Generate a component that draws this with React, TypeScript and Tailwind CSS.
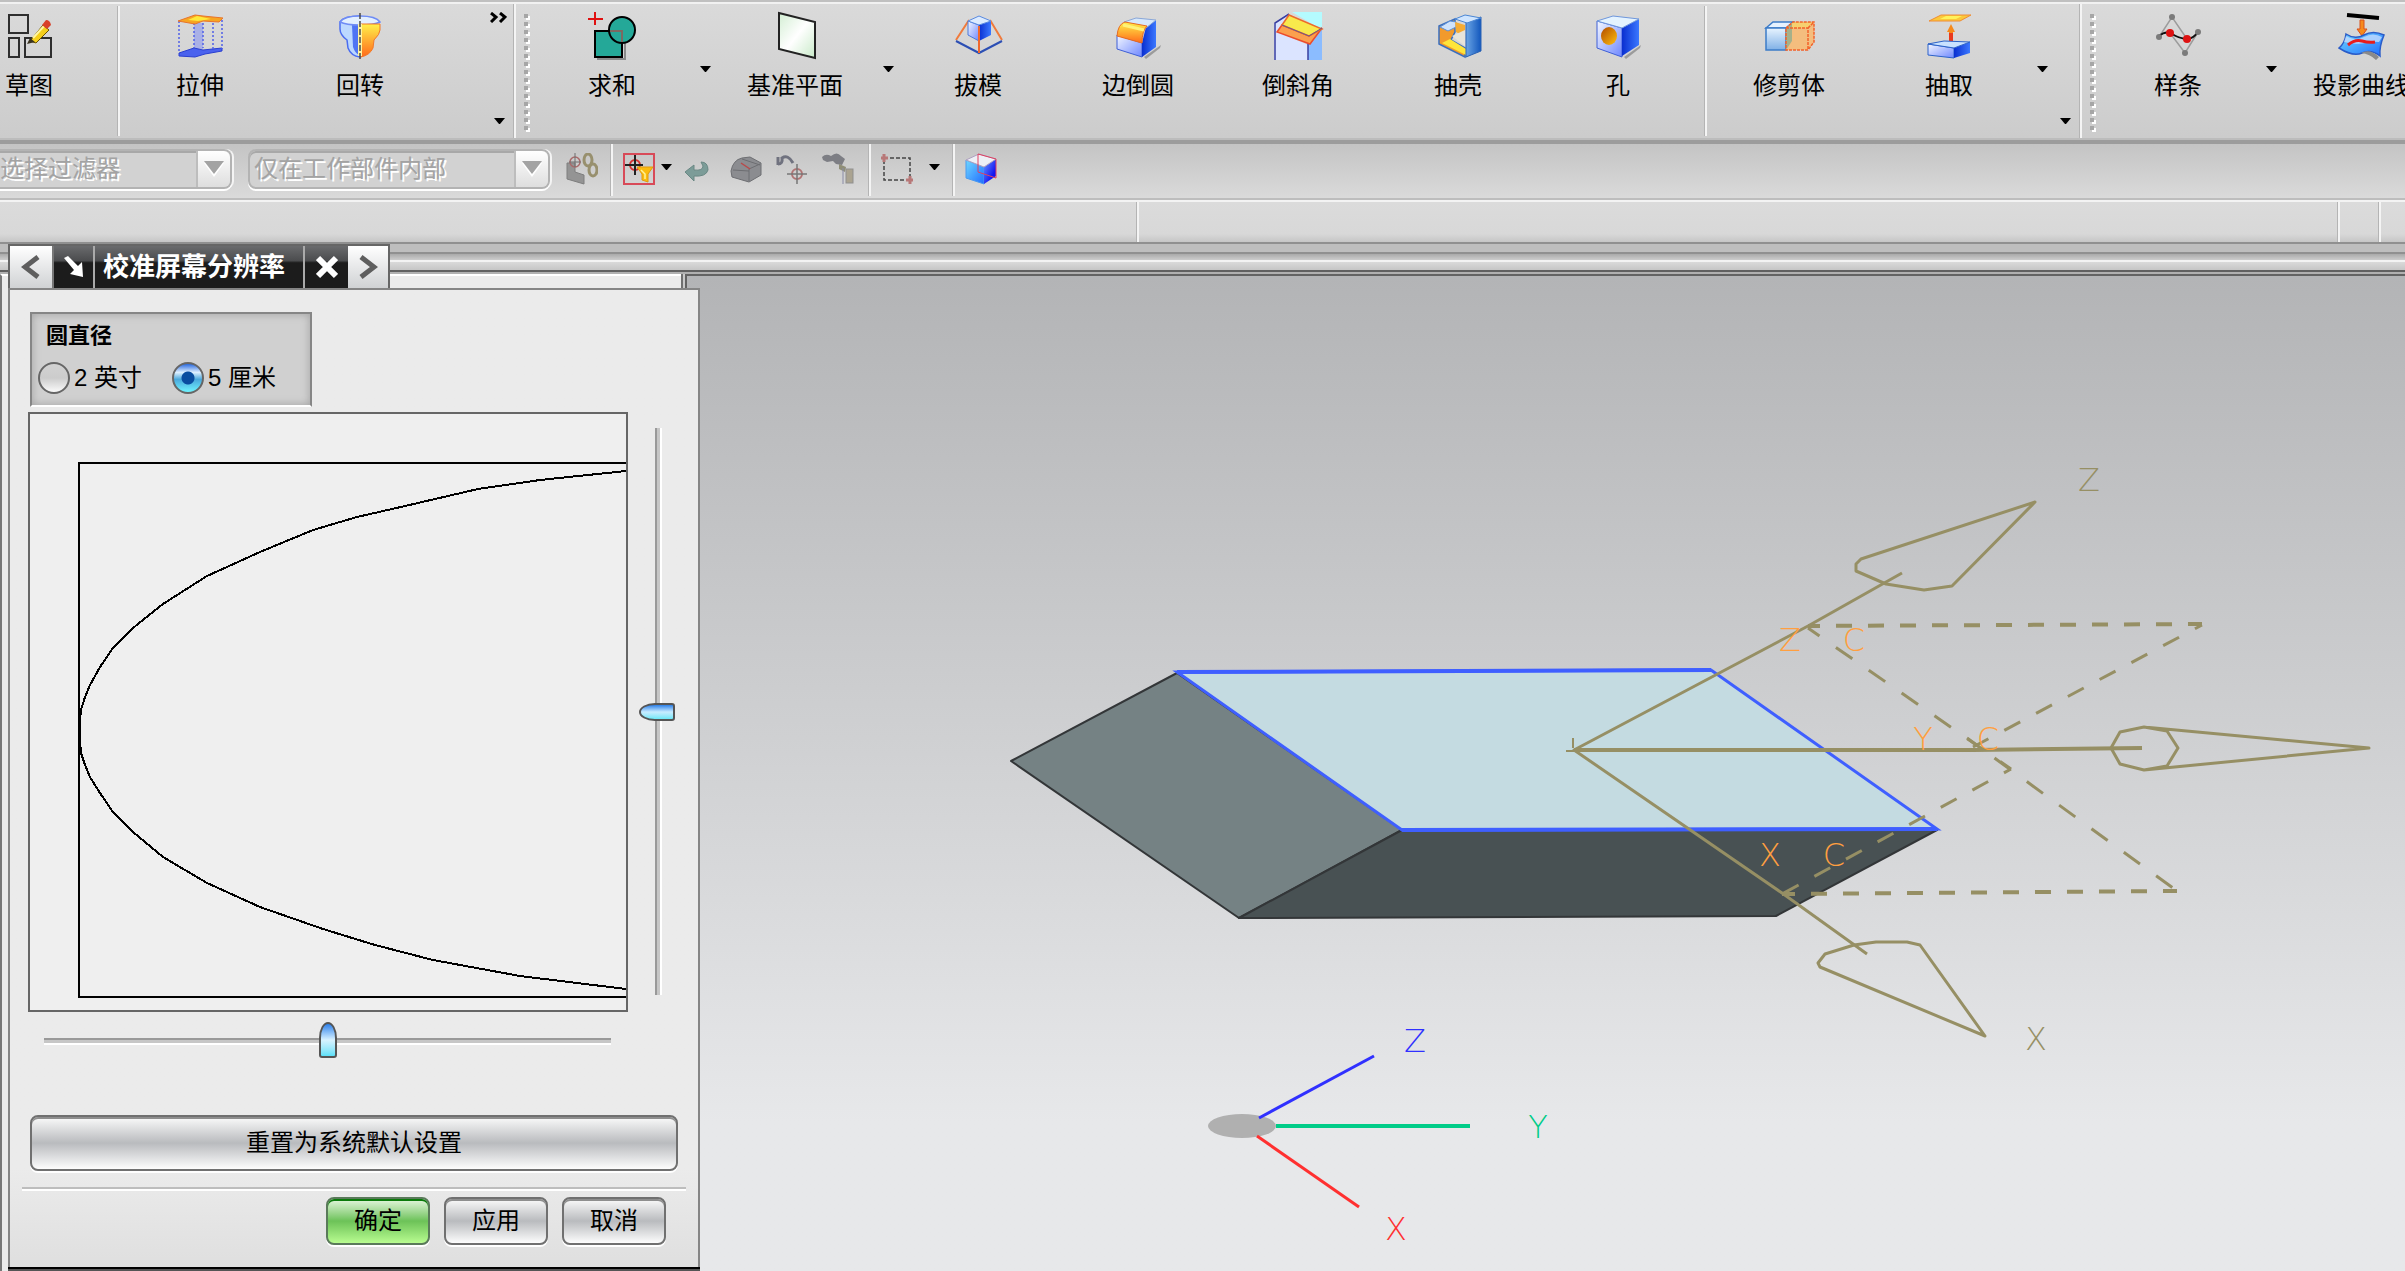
import { useState } from 'react'
import type { ReactNode } from 'react'
import clsx from 'clsx'

/* ---------- shared gradients ---------- */

function Gradients() {
  return (
    <svg className="h-0 w-0" aria-hidden="true">
      <defs>
        <linearGradient id="front" x1="0" y1="0" x2="1" y2="1">
          <stop offset="0" stopColor="#f4f8ff" />
          <stop offset="1" stopColor="#6d86ff" />
        </linearGradient>
        <linearGradient id="side" x1="0" y1="0" x2="1" y2="0">
          <stop offset="0" stopColor="#0a2fd0" />
          <stop offset="1" stopColor="#3b78ff" />
        </linearGradient>
        <linearGradient id="sky" x1="0" y1="0" x2="1" y2="0">
          <stop offset="0" stopColor="#6aa4e4" />
          <stop offset="1" stopColor="#1257bd" />
        </linearGradient>
        <linearGradient id="amber" x1="0" y1="0" x2="0" y2="1">
          <stop offset="0" stopColor="#fff04a" />
          <stop offset="1" stopColor="#ff6a1a" />
        </linearGradient>
        <linearGradient id="hole" x1="0" y1="0" x2="1" y2="1">
          <stop offset="0" stopColor="#b04a00" />
          <stop offset="1" stopColor="#ffc010" />
        </linearGradient>
        <linearGradient id="mint" x1="0" y1="0" x2="1" y2="1">
          <stop offset="0" stopColor="#d3eed3" />
          <stop offset="0.5" stopColor="#ffffff" />
          <stop offset="1" stopColor="#c8eac8" />
        </linearGradient>
        <linearGradient id="pale" x1="0" y1="0" x2="0" y2="1">
          <stop offset="0" stopColor="#e8f4ff" />
          <stop offset="1" stopColor="#7fb0e6" />
        </linearGradient>
        <linearGradient id="cyan" x1="0" y1="0" x2="1" y2="1">
          <stop offset="0" stopColor="#6fd8ff" />
          <stop offset="1" stopColor="#1f6cff" />
        </linearGradient>
        <linearGradient id="deep" x1="0" y1="0" x2="1" y2="1">
          <stop offset="0" stopColor="#6a9cff" />
          <stop offset="0.7" stopColor="#1414f0" />
        </linearGradient>
      </defs>
    </svg>
  )
}

/* ---------- toolbar icons, 48 x 48 ---------- */

function Icon({ children }: { children: ReactNode }) {
  return (
    <svg width="48" height="48" viewBox="0 0 48 48" fill="none" className="shrink-0 overflow-visible" aria-hidden="true">
      {children}
    </svg>
  )
}

const sketchIcon = (
  <Icon>
    <g stroke="#2e2e2e" strokeWidth="2">
      <rect x="4" y="3" width="19" height="18" />
      <rect x="4" y="26" width="10" height="19" />
      <rect x="20" y="26" width="26" height="19" />
    </g>
    <path d="M25 29l13-16 6 5-13 13z" fill="#f5cf1c" stroke="#6b5200" />
    <path d="M28 26l12-13" stroke="#fff6a0" strokeWidth="2" />
    <path d="M37 13l4-5q4 0 5 5l-4 4z" fill="#d8402a" />
    <path d="M22 32l3-6 5 4z" fill="#3a3320" />
  </Icon>
)

const extrudeIcon = (
  <Icon>
    <path d="M18 11h9v26h-9z" fill="#a9b0e6" />
    <path d="M3 41l15-5 9 2 19-2v3l-17 3-10 3-16-1z" fill="#4a62ee" stroke="#2a3fd0" />
    <path d="M3 9v31M46 8v29M37 11v26M18 11v25M27 11v25" stroke="#5060e8" strokeWidth="1.5" strokeDasharray="2 2" />
    <path d="M2 9l17-6 8 1 20 2-4 4-16-1-8 3z" fill="#f7a522" stroke="#e8742a" />
    <path d="M12 8l9-4 14 3-13 2z" fill="#ffe93a" />
  </Icon>
)

const revolveIcon = (
  <Icon>
    <path d="M4 10q4-6 20-6v41q-9-1-12-9l-1-8q-7-5-7-11z" fill="#bcd8ff" stroke="#4b6df0" strokeWidth="1.5" />
    <path d="M16 13h7v30q-4-2-6-8z" fill="#4f74f4" />
    <path d="M4 10q4-6 20-6t20 6q-6 3-20 3T4 10z" fill="#e2efff" stroke="#6f8cf5" strokeWidth="1.5" />
    <path d="M25 12h19v6q0 4-6 10l-1 8q-3 7-12 9z" fill="url(#amber)" stroke="#f2792a" />
    <path d="M22 12h4v32h-4z" fill="#fff3a0" />
    <path d="M24 1v46" stroke="#4a4a4a" strokeWidth="1.5" strokeDasharray="6 2" />
  </Icon>
)

const uniteIcon = (
  <Icon>
    <path d="M9 47h28V20" stroke="#8b8b8b" strokeWidth="2" />
    <rect x="7" y="19" width="27" height="26" fill="#24a898" stroke="#000" strokeWidth="2" />
    <circle cx="34" cy="18" r="13" fill="#24a898" stroke="#000" strokeWidth="2" />
    <path d="M22 19h12v11" stroke="#7c6a62" strokeWidth="2" />
    <path d="M7 0v13M0 7h15" stroke="#e01010" strokeWidth="2" />
  </Icon>
)

const planeIcon = (
  <Icon>
    <path d="M8 1l36 9v36L8 37z" fill="url(#mint)" stroke="#222" strokeWidth="2" />
  </Icon>
)

const draftIcon = (
  <Icon>
    <path d="M15 8L2 28M36 8l12 20" stroke="#f07a3c" strokeWidth="2" />
    <path d="M2 29l23 12 23-12" stroke="#2c4fb4" strokeWidth="2" />
    <path d="M14 9l11 4v16l-11-6z" fill="url(#front)" stroke="#4b78d8" />
    <path d="M25 13l12-4v14l-12 6z" fill="url(#side)" />
    <path d="M14 9l11-5 12 5-12 4z" fill="#dcebff" stroke="#5a8ae0" />
    <path d="M25 14v27" stroke="#f0672c" strokeWidth="2" />
  </Icon>
)

const blendIcon = (
  <Icon>
    <path d="M30 45l17-12-1 3-14 11z" fill="#9b9b9b" />
    <path d="M3 23l25 8v14L3 37z" fill="url(#front)" stroke="#3e5fd6" />
    <path d="M28 45V31l4-16 10-7v27z" fill="url(#side)" />
    <path d="M10 10l12-4 20 2-10 8z" fill="#d7e8fb" stroke="#8aa7d8" />
    <path d="M3 24q1-12 8-14l22 4q-5 5-5 17z" fill="url(#amber)" stroke="#e86a20" />
    <path d="M9 13l21 5" stroke="#fff27a" strokeWidth="3" />
  </Icon>
)

const chamferIcon = (
  <Icon>
    <path d="M18 0h30v18z" fill="#b4fbff" />
    <path d="M0 12L12 2l3 1L4 20l30 13v15H0z" fill="#dbe4ff" />
    <path d="M34 30l14-13v31H34z" fill="#8bbcff" />
    <path d="M1 48V11L15 2M34 48V30" stroke="#3a3fa0" strokeWidth="1.5" />
    <path d="M8 13l27 11 13-8-12 16L3 20z" fill="#fba04e" stroke="#ec4b2c" strokeWidth="1.5" />
    <path d="M15 3l33 14-13 7L8 13z" fill="#f8e94c" stroke="#ec6a2c" strokeWidth="1.5" />
    <path d="M8 13l27 11 13-8" stroke="#6a5a8c" />
  </Icon>
)

const shellIcon = (
  <Icon>
    <path d="M5 14l16-7v13l-4 8 14 8v9L5 32z" fill="#f29a2c" stroke="#3a6fc0" strokeWidth="1.5" />
    <path d="M6 15l8 4 8-4v-5l-6-1z" fill="#cfe2fb" stroke="#5a8fd8" />
    <path d="M21 10l10 3v12l-9-5z" fill="#f6ac34" />
    <path d="M18 24l13-6v16z" fill="#e8e4da" />
    <path d="M8 31l8-4 16 10v6z" fill="#ffe53a" />
    <path d="M32 10l15-5v34l-15 6z" fill="url(#sky)" stroke="#2a62b4" />
    <path d="M21 7l10-4 16 3-14 5z" fill="#cfe5ff" stroke="#4a86d4" />
  </Icon>
)

const holeIcon = (
  <Icon>
    <path d="M30 45l17-12-1 3-14 11z" fill="#9b9b9b" />
    <path d="M3 9l25 7v29L3 36z" fill="url(#front)" stroke="#3e5fd6" />
    <path d="M28 16l17-9v26L28 44z" fill="url(#side)" />
    <path d="M3 9l16-5 26 3-17 9z" fill="#e4f3ff" stroke="#6f97dc" />
    <ellipse cx="15" cy="24" rx="8" ry="9" fill="url(#hole)" />
  </Icon>
)

const trimIcon = (
  <Icon>
    <path d="M1 16l7-6h20l-7 6z" fill="#e6f2ff" stroke="#3d7cc8" strokeWidth="1.5" />
    <path d="M1 16h20v22H1z" fill="url(#pale)" stroke="#3d7cc8" strokeWidth="1.5" />
    <path d="M21 16l7-6h21v20l-6 8H21z" fill="#f4bd7e" />
    <path d="M21 16l7-6h21l-6 6z" fill="#f6d070" />
    <path d="M21 16l6-5v18l-6 9z" fill="#a5b08a" />
    <path d="M21 16h22v22H21zM21 16l7-6h21v20l-6 8M43 16l6-6" stroke="#f2622a" strokeWidth="1.5" strokeDasharray="3 1" />
  </Icon>
)

const extractIcon = (
  <Icon>
    <path d="M4 9l12-6h30l-11 6z" fill="#fbc83a" stroke="#f08c34" />
    <path d="M15 7l6-3h16l-6 3z" fill="#fff25a" />
    <path d="M26 12l4 8h-2v9h-4v-9h-2z" fill="#f58a1c" />
    <path d="M24 21h4v8h-4z" fill="#ea3a1c" />
    <path d="M3 32l26 4v10L3 43z" fill="url(#front)" stroke="#2c62c8" />
    <path d="M29 36l16-6v11l-16 5z" fill="url(#side)" />
    <path d="M3 32l16-3 26 1-16 6z" fill="#c9e2ff" stroke="#2c62c8" />
  </Icon>
)

const splineIcon = (
  <Icon>
    <path d="M5 25L18 5l15 22M16 21l15 20L44 20" stroke="#9c9c9c" strokeWidth="1.5" />
    <path d="M5 24q7-6 13-2t15 5q6 0 11-7" stroke="#111" strokeWidth="2" />
    <g fill="#7b7b7b">
      <circle cx="18" cy="5" r="3" />
      <circle cx="5" cy="25" r="3" />
      <circle cx="44" cy="20" r="3" />
      <circle cx="31" cy="41" r="3" />
    </g>
    <circle cx="16" cy="21" r="4" fill="#dd1212" />
    <circle cx="33" cy="27" r="4" fill="#dd1212" />
  </Icon>
)

const projectIcon = (
  <Icon>
    <path d="M10 3l32 3" stroke="#000" strokeWidth="4" />
    <path d="M23 8h4v9h3l-5 7-5-7h3z" fill="#f58a1c" stroke="#d8501c" />
    <path d="M9 22q9 6 18 1t20 0q-5 12-4 21-9-7-18-3T2 36q6-5 7-14z" fill="url(#cyan)" stroke="#2a5cc8" strokeWidth="1.5" />
    <path d="M9 24q9 6 18 1t18 0l-3 5q-8-1-14 1T7 30z" fill="#c4dcff" opacity="0.8" />
    <path d="M24 41q9-5 18 4l-3 3q-6-6-15-7z" fill="#8a8a8a" />
    <path d="M11 33q7-6 14-4t13 1" stroke="#e81c1c" strokeWidth="3" />
  </Icon>
)

/* ---------- selection bar icons, 32 x 32 ---------- */

function SmallIcon({ children }: { children: ReactNode }) {
  return (
    <svg width="32" height="32" viewBox="0 0 32 32" fill="none" className="shrink-0" aria-hidden="true">
      {children}
    </svg>
  )
}

const linkIcon = (
  <SmallIcon>
    <path d="M1 10h8v9l9 3v9L1 26z" fill="#949494" stroke="#7e7e7e" />
    <circle cx="9" cy="9" r="5" stroke="#a86a6a" strokeWidth="1.5" />
    <path d="M9 0v14M3 9h12" stroke="#6e6e6e" />
    <ellipse cx="22" cy="7" rx="4" ry="6" stroke="#98906e" strokeWidth="3" />
    <ellipse cx="27" cy="17" rx="4" ry="6" stroke="#98906e" strokeWidth="3" />
  </SmallIcon>
)

const filterIcon = (
  <SmallIcon>
    <rect x="1" y="1" width="30" height="30" stroke="#d84a58" strokeWidth="2" />
    <circle cx="12" cy="12" r="5" stroke="#d83030" strokeWidth="2" />
    <path d="M12 2v20M2 12h18" stroke="#222" strokeWidth="2" />
    <path d="M14 14h16l-5 7v8l-6-2v-6z" fill="#fbbc10" stroke="#e09a10" />
    <path d="M18 17l4 4v5" stroke="#fff29a" strokeWidth="1.5" />
  </SmallIcon>
)

const backIcon = (
  <SmallIcon>
    <path d="M3 19l9-7v5q9 1 9-4l-2-4q7 0 7 8-2 7-14 6v5z" fill="#7c9c98" stroke="#6a8884" />
  </SmallIcon>
)

const faceIcon = (
  <SmallIcon>
    <path d="M1 18q2-11 11-13l8-1 11 6v12l-12 7L2 24z" fill="#8b8c90" stroke="#6d6e72" />
    <path d="M12 6l18 6M19 28V16l11-5M3 17l16 1" stroke="#6d6e72" />
    <path d="M11 10l9 6" stroke="#b84a4a" strokeWidth="1.5" />
  </SmallIcon>
)

const snapArcIcon = (
  <SmallIcon>
    <path d="M2 12V4M2 11q5 0 4-6 6-4 11 5" stroke="#70727f" strokeWidth="3" />
    <circle cx="21" cy="21" r="5" stroke="#b07474" strokeWidth="2" />
    <path d="M21 11v20M11 21h20" stroke="#777" strokeWidth="1.5" />
  </SmallIcon>
)

const boltIcon = (
  <SmallIcon>
    <path d="M0 4q4-4 9-1 6-5 10 0l4 3-3 6-6-1-3-3-6 1-4-2z" fill="#7d7e84" />
    <path d="M17 11l7 3-1 5-6-3z" fill="#8f8e78" />
    <path d="M21 15v16" stroke="#8a8ca6" />
    <rect x="24" y="16" width="7" height="14" fill="#aaa390" stroke="#8f8f8f" />
  </SmallIcon>
)

const marqueeIcon = (
  <SmallIcon>
    <path d="M3 5h26v22H3z" stroke="#444" strokeWidth="1.5" strokeDasharray="4 2" />
    <path d="M0 5h7M3 1v8M25 27h7M29 23v8" stroke="#b87878" strokeWidth="3" />
  </SmallIcon>
)

const cubeIcon = (
  <SmallIcon>
    <path d="M1 7l18 7v17L1 25z" fill="url(#cyan)" stroke="#4a9af0" />
    <path d="M19 14l12-8v17l-12 8z" fill="url(#deep)" />
    <path d="M1 7l13-6 17 5-12 8z" fill="#eef0f6" stroke="#b0a0c0" />
    <path d="M13 1l18 5v19l-18-6z" stroke="#e04060" />
  </SmallIcon>
)

/* ---------- toolbar parts ---------- */

function Caret() {
  return (
    <svg width="11" height="6" viewBox="0 0 11 6" aria-hidden="true">
      <path d="M0 0h11L6 6H5z" fill="#000" />
    </svg>
  )
}

function ToolButton({ label, icon, narrow }: { label: string; icon: ReactNode; narrow?: boolean }) {
  return (
    <button
      type="button"
      className={clsx('flex shrink-0 flex-col items-center pt-2 text-2xl leading-9', narrow ? 'w-[58px]' : 'w-[160px]')}
    >
      {icon}
      <span className="mt-2 whitespace-nowrap">{label}</span>
    </button>
  )
}

function DropButton({ label }: { label: string }) {
  return (
    <button type="button" aria-label={label} className="flex h-full w-[23px] shrink-0 items-start justify-center pt-[62px] pl-1">
      <Caret />
    </button>
  )
}

function Divider({ className }: { className?: string }) {
  return <div className={clsx('w-[3px] shrink-0 border-r-2 border-l border-r-[#f4f4f4] border-l-[#b4b4b4]', className)} />
}

function Gripper() {
  return (
    <div className="ml-2 flex w-2 shrink-0 flex-col gap-1 pt-[10px]">
      {Array.from({ length: 15 }, (_, i) => (
        <div key={i} className="size-1 bg-[#a6a6a6] shadow-[2px_2px_0_#fff]" />
      ))}
    </div>
  )
}

function MainToolbar() {
  return (
    <div className="flex h-[138px] overflow-hidden border-t-2 border-b-2 border-t-[#f1f1f1] border-b-[#bcbcbc] bg-linear-to-b from-[#dadada] to-[#cccccc]">
      <ToolButton label="草图" icon={sketchIcon} narrow />
      <Divider className="mt-0.5 mb-0.5 ml-[59px]" />
      <ToolButton label="拉伸" icon={extrudeIcon} />
      <ToolButton label="回转" icon={revolveIcon} />
      <div className="flex w-[73px] shrink-0 flex-col items-end justify-between pt-2 pr-1 pb-3.5">
        <button type="button" aria-label="更多命令" className="pr-0.5">
          <svg width="17" height="11" viewBox="0 0 17 11" fill="none" stroke="#000" strokeWidth="3">
            <path d="M1 1l5 4-5 5M10 1l5 4-5 5" />
          </svg>
        </button>
        <button type="button" aria-label="工具条选项" className="pr-1">
          <Caret />
        </button>
      </div>
      <Divider />
      <Gripper />
      <ToolButton label="求和" icon={uniteIcon} />
      <DropButton label="求和选项" />
      <ToolButton label="基准平面" icon={planeIcon} />
      <DropButton label="基准平面选项" />
      <ToolButton label="拔模" icon={draftIcon} />
      <ToolButton label="边倒圆" icon={blendIcon} />
      <ToolButton label="倒斜角" icon={chamferIcon} />
      <ToolButton label="抽壳" icon={shellIcon} />
      <ToolButton label="孔" icon={holeIcon} />
      <Divider className="mt-0.5 mr-0.5 mb-0.5 ml-1.5" />
      <ToolButton label="修剪体" icon={trimIcon} />
      <ToolButton label="抽取" icon={extractIcon} />
      <DropButton label="抽取选项" />
      <button type="button" aria-label="工具条选项" className="flex shrink-0 items-end pb-3.5 pl-2">
        <Caret />
      </button>
      <Divider className="ml-2" />
      <Gripper />
      <ToolButton label="样条" icon={splineIcon} />
      <DropButton label="样条选项" />
      <ToolButton label="投影曲线" icon={projectIcon} />
    </div>
  )
}

function ComboBox({ label, value, className }: { label: string; value: string; className?: string }) {
  return (
    <div
      className={clsx(
        'flex h-10 shrink-0 overflow-hidden rounded-lg border-2 border-[#b3b3b3] bg-[#d2d2d2] shadow-[0_2px_0_#fff,2px_0_0_#f4f4f4,inset_0_2px_0_#a8a8a8]',
        className,
      )}
    >
      <select
        aria-label={label}
        disabled
        className="h-full min-w-0 flex-1 appearance-none bg-transparent text-2xl leading-9 text-[#a3a3a3] opacity-100 [text-shadow:2px_2px_0_#fff]"
      >
        <option>{value}</option>
      </select>
      <div className="flex w-[34px] items-center justify-center border-l-2 border-[#bdbdbd] bg-linear-to-b from-white to-[#dedede]">
        <svg width="20" height="16" viewBox="0 0 20 16" aria-hidden="true">
          <path d="M0 2h20L10 16z" fill="#fff" />
          <path d="M0 0h20L10 13z" fill="#a3a3a3" />
        </svg>
      </div>
    </div>
  )
}

function BarButton({ label, icon, className }: { label: string; icon: ReactNode; className?: string }) {
  return (
    <button type="button" aria-label={label} className={clsx('shrink-0', className)}>
      {icon}
    </button>
  )
}

function SelectionBar() {
  return (
    <div className="flex h-[60px] items-center overflow-hidden border-t-4 border-b-2 border-t-[#9c9c9c] border-b-[#bdbdbd] bg-linear-to-b from-[#c4c4c4] to-[#dadada] pb-1">
      <ComboBox label="选择过滤器" value="选择过滤器" className="w-[232px] rounded-l-none border-l-0" />
      <ComboBox label="选择范围" value="仅在工作部件内部" className="ml-4 w-[302px] pl-1" />
      <BarButton label="关联" icon={linkIcon} className="ml-4" />
      <Divider className="ml-3 h-[54px]" />
      <BarButton label="过滤" icon={filterIcon} className="ml-2.5" />
      <BarButton label="过滤选项" icon={<Caret />} className="ml-1.5 pb-1" />
      <BarButton label="返回" icon={backIcon} className="ml-2.5" />
      <BarButton label="面" icon={faceIcon} className="ml-4" />
      <BarButton label="捕捉" icon={snapArcIcon} className="ml-3.5" />
      <BarButton label="螺栓" icon={boltIcon} className="ml-3.5" />
      <Divider className="ml-3.5 h-[54px]" />
      <BarButton label="矩形选择" icon={marqueeIcon} className="ml-2.5" />
      <BarButton label="矩形选择选项" icon={<Caret />} className="ml-4 pb-1" />
      <Divider className="ml-3 h-[54px]" />
      <BarButton label="着色" icon={cubeIcon} className="ml-2.5" />
    </div>
  )
}

function StatusBar() {
  return (
    <div className="flex h-[44px] border-t-2 border-b-2 border-t-[#f3f3f3] border-b-[#909090] bg-linear-to-b from-[#dbdbdb] via-[#d8d8d8] via-80% to-[#c6c6c6]">
      <div className="w-[1136px] shrink-0" />
      <Divider />
      <div className="flex-1" />
      <Divider />
      <div className="w-[38px]" />
      <Divider />
      <div className="w-6" />
    </div>
  )
}

/* ---------- 3D scene ---------- */

const AXIS = '#968f64'
const CSYS = '#ff9f40'

const LABELS = [
  { text: 'Z', x: 2089, y: 491, fill: AXIS },
  { text: 'X', x: 2036, y: 1050, fill: AXIS },
  { text: 'Z', x: 1790, y: 651, fill: CSYS },
  { text: 'C', x: 1854, y: 651, fill: CSYS },
  { text: 'Y', x: 1923, y: 750, fill: CSYS },
  { text: 'C', x: 1988, y: 750, fill: CSYS },
  { text: 'X', x: 1770, y: 866, fill: CSYS },
  { text: 'C', x: 1834, y: 866, fill: CSYS },
  { text: 'Z', x: 1415, y: 1052, fill: '#3030ff' },
  { text: 'Y', x: 1538, y: 1138, fill: '#00cc88' },
  { text: 'X', x: 1396, y: 1240, fill: '#ff3030' },
]

function Viewport() {
  return (
    <svg
      viewBox="689 276 1716 995"
      preserveAspectRatio="xMinYMin meet"
      fill="none"
      strokeWidth="3"
      className="block w-full"
      role="img"
      aria-label="图形窗口"
    >
      {/* solid body */}
      <g strokeWidth="2" stroke="#333638" strokeLinejoin="round">
        <path d="M1011 761L1177 673L1402 830L1239 918z" fill="#758284" />
        <path d="M1239 918L1402 830H1937L1776 916z" fill="#485153" />
      </g>
      <path d="M1177 672L1711 670L1937 829L1402 830z" fill="#c4dbe1" stroke="#3f5fff" />
      <path d="M1177 672L1711 670M1402 830L1937 829" stroke="#3f5fff" strokeWidth="4" />

      {/* datum planes */}
      <g stroke={AXIS}>
        <path d="M1808 626L2202 624" strokeWidth="4" strokeDasharray="16 16" strokeDashoffset="4" />
        <path d="M1782 894L2177 891" strokeWidth="4" strokeDasharray="16 16" strokeDashoffset="3" />
        <path d="M2202 625L1973 747" strokeDasharray="18 18" strokeDashoffset="10" />
        <path d="M2011 769L1782 894" strokeDasharray="18 18" strokeDashoffset="10" />
        <path d="M1808 628L2011 769" strokeDasharray="20 20" strokeDashoffset="6" />
        <path d="M1967 738L2177 891" strokeDasharray="20 20" strokeDashoffset="6" />
      </g>

      {/* axes */}
      <g stroke={AXIS} strokeLinejoin="round">
        <path d="M1902 573L1808 626L1574 750L1782 893L1867 954" />
        <path d="M1574 750H1973L2142 748" strokeWidth="4" />
        <path d="M1566 751h8M1573 738v10" strokeWidth="2" />
        <path d="M2035 502L1861 559L1856 564V571L1886 584L1924 590L1952 586z" />
        <path d="M1985 1036L1820 967L1818 963L1825 954L1854 945L1876 942H1907L1920 945z" />
        <path d="M2144 727L2167 731L2178 748L2167 766L2144 770L2120 764L2111 748L2120 732zL2369 748L2144 770" />
      </g>

      {/* view triad */}
      <ellipse cx="1242" cy="1126" rx="34" ry="12" fill="#b0b0b0" />
      <path d="M1276 1126H1470" stroke="#00cc88" strokeWidth="4" />
      <path d="M1259 1118L1374 1056" stroke="#3030ff" />
      <path d="M1257 1136L1359 1207" stroke="#ff3030" />

      {LABELS.map(({ text, x, y, fill }) => (
        <text
          key={`${x}-${y}`}
          x={x}
          y={y}
          fill={fill}
          stroke="none"
          textAnchor="middle"
          className="font-['DejaVu_Sans',sans-serif] text-[32px] font-extralight"
        >
          {text}
        </text>
      ))}
    </svg>
  )
}

/* ---------- dialog ---------- */

const BUTTON =
  'rounded-lg border-2 border-[#707070] bg-linear-to-b from-[#fbfbfb] via-[#b9bbbe] to-[#fdfdfd] text-2xl leading-9 shadow-[0_2px_0_#fff,inset_0_2px_0_#8e8e8e]'

function TitleTabs() {
  return (
    <div className="flex h-11 w-[382px] border-2 border-b-0 border-[#666] bg-[#1c1c1c] text-white">
      <button type="button" aria-label="上一个" className="flex w-[42px] items-center justify-center bg-linear-to-b from-white to-[#d0d2d4]">
        <svg width="20" height="24" viewBox="0 0 20 24" fill="none" stroke="#5e5e5e" strokeWidth="5">
          <path d="M17 2L4 12l13 10" />
        </svg>
      </button>
      <div className="flex flex-1 items-stretch border-l-2 border-[#777] bg-linear-to-b from-[#6a6b6d] from-0% via-[#4b4c4e] via-35% to-[#1c1c1c] to-40%">
        <button type="button" aria-label="固定" className="flex w-[39px] items-center justify-center">
          <svg width="22" height="24" viewBox="0 0 22 24" fill="#fff">
            <path d="M1 3l4-2 10 10 4-4 1 15-13-3 4-4z" />
          </svg>
        </button>
        <h1 className="flex-1 border-r-2 border-l-2 border-[#aaa] pl-2 text-[26px] leading-[42px] font-bold whitespace-nowrap">校准屏幕分辨率</h1>
        <button type="button" aria-label="关闭" className="flex w-[43px] items-center justify-center">
          <svg width="22" height="24" viewBox="0 0 22 24" stroke="#fff" strokeWidth="6">
            <path d="M2 3l18 18M20 3L2 21" />
          </svg>
        </button>
      </div>
      <button type="button" aria-label="下一个" className="flex w-10 items-center justify-center bg-linear-to-b from-white to-[#d0d2d4]">
        <svg width="20" height="24" viewBox="0 0 20 24" fill="none" stroke="#5e5e5e" strokeWidth="5">
          <path d="M3 2l13 10L3 22" />
        </svg>
      </button>
    </div>
  )
}

function Radio({ label, checked, onChange }: { label: string; checked: boolean; onChange: () => void }) {
  return (
    <label className="flex items-center gap-1 text-2xl leading-8">
      <input
        type="radio"
        name="diameter"
        checked={checked}
        onChange={onChange}
        className="size-8 appearance-none rounded-full border-2 border-[#666] bg-linear-to-b from-[#d2d2d2] via-[#cccccc] to-[#fafafa] checked:bg-[radial-gradient(circle,#0a4da0_0_6px,transparent_7px),linear-gradient(#2a6ae0,#dff0ff_30%,#4aa8dc_55%,#6ff4ff)]"
      />
      {label}
    </label>
  )
}

function Calibration() {
  const [unit, setUnit] = useState<'inch' | 'cm'>('cm')
  const [width, setWidth] = useState(50)
  const [height, setHeight] = useState(50)

  return (
    <div className="border-2 border-b-0 border-[#858585] bg-linear-to-b from-[#ebebeb] from-90% to-[#dfdfdf] px-[18px] pt-[22px] pb-[22px]">
      <div
        role="radiogroup"
        aria-labelledby="diameter-title"
        className="ml-0.5 h-[95px] w-[282px] border-2 border-[#868686] border-b-white bg-[#d0d0d0] pt-1.5 pl-1.5 shadow-[inset_0_0_8px_#a0a0a0]"
      >
        <h2 id="diameter-title" className="pl-2 text-[22px] leading-8 font-bold">
          圆直径
        </h2>
        <div className="mt-2.5 flex gap-[30px]">
          <Radio label="2 英寸" checked={unit === 'inch'} onChange={() => setUnit('inch')} />
          <Radio label="5 厘米" checked={unit === 'cm'} onChange={() => setUnit('cm')} />
        </div>
      </div>

      <div className="mt-[5px] flex">
        <div className="w-[600px] border-2 border-[#666] bg-[#efefef]">
          <svg
            viewBox="30 414 596 596"
            className="block w-full"
            fill="none"
            stroke="#000"
            strokeWidth="2"
            shapeRendering="crispEdges"
            role="img"
            aria-label="校准圆"
          >
            <path d="M640 463H79V997H640" />
            <path d="M626 471L540 480L478 489L405 506L357 517L313 530L260 552L207 576L163 604L133 628L113 648L100 667L90 685L85 697L81 710L80 720V740L81 753L85 765L90 777L100 793L113 812L133 832L163 857L207 883L260 907L323 929L375 945L433 960L520 976L626 989" />
          </svg>
        </div>
        <input
          type="range"
          aria-label="高度"
          value={height}
          onChange={(e) => setHeight(Number(e.target.value))}
          className="mt-4 ml-3 h-[567px] w-9 appearance-none bg-transparent [writing-mode:vertical-lr] [&::-webkit-slider-runnable-track]:w-[7px] [&::-webkit-slider-runnable-track]:border-r-2 [&::-webkit-slider-runnable-track]:border-l-2 [&::-webkit-slider-runnable-track]:border-l-[#999] [&::-webkit-slider-runnable-track]:border-r-white [&::-webkit-slider-runnable-track]:bg-[#c6c6c6] [&::-webkit-slider-thumb]:-ml-[18px] [&::-webkit-slider-thumb]:h-[18px] [&::-webkit-slider-thumb]:w-9 [&::-webkit-slider-thumb]:appearance-none [&::-webkit-slider-thumb]:[border-radius:16px_3px_3px_16px/9px_3px_3px_9px] [&::-webkit-slider-thumb]:border-2 [&::-webkit-slider-thumb]:border-[#555] [&::-webkit-slider-thumb]:bg-linear-to-b [&::-webkit-slider-thumb]:from-[#2a80e8] [&::-webkit-slider-thumb]:via-[#c8ecff] [&::-webkit-slider-thumb]:to-[#6ae8f8]"
        />
      </div>

      <input
        type="range"
        aria-label="宽度"
        value={width}
        onChange={(e) => setWidth(Number(e.target.value))}
        className="mt-[11px] ml-4 block h-9 w-[567px] appearance-none bg-transparent [&::-webkit-slider-runnable-track]:h-[7px] [&::-webkit-slider-runnable-track]:border-t-2 [&::-webkit-slider-runnable-track]:border-b-2 [&::-webkit-slider-runnable-track]:border-t-[#999] [&::-webkit-slider-runnable-track]:border-b-white [&::-webkit-slider-runnable-track]:bg-[#c6c6c6] [&::-webkit-slider-thumb]:-mt-[18px] [&::-webkit-slider-thumb]:h-9 [&::-webkit-slider-thumb]:w-[18px] [&::-webkit-slider-thumb]:appearance-none [&::-webkit-slider-thumb]:[border-radius:9px_9px_3px_3px/16px_16px_3px_3px] [&::-webkit-slider-thumb]:border-2 [&::-webkit-slider-thumb]:border-[#555] [&::-webkit-slider-thumb]:bg-linear-to-b [&::-webkit-slider-thumb]:from-[#2a80e8] [&::-webkit-slider-thumb]:via-[#d8f2ff] [&::-webkit-slider-thumb]:to-[#5ae0f8]"
      />

      <button
        type="button"
        onClick={() => {
          setWidth(50)
          setHeight(50)
        }}
        className={clsx(BUTTON, 'mt-14 ml-0.5 block h-14 w-[648px]')}
      >
        重置为系统默认设置
      </button>

      <div className="-mx-1.5 mt-4 border-t-2 border-b-2 border-t-[#bdbdbd] border-b-white" />

      <div className="mt-1.5 flex justify-end gap-3.5 pr-3.5">
        <button
          type="button"
          className="h-12 w-[104px] rounded-lg border-2 border-[#5a7a5a] bg-linear-to-b from-[#e4f6de] via-[#6cc258] to-[#b8fc90] text-2xl leading-9 shadow-[0_2px_0_#fff,inset_0_2px_0_#0a7a0a]"
        >
          确定
        </button>
        <button type="button" className={clsx(BUTTON, 'h-12 w-[104px]')}>
          应用
        </button>
        <button type="button" className={clsx(BUTTON, 'h-12 w-[104px]')}>
          取消
        </button>
      </div>
    </div>
  )
}

export default function App() {
  return (
    <div className="flex min-h-screen flex-col overflow-hidden bg-[#c0c0c0] font-['Liberation_Sans','Noto_Sans_CJK_SC',sans-serif] text-black">
      <Gradients />
      <header className="pt-0.5">
        <MainToolbar />
        <SelectionBar />
        <StatusBar />
      </header>

      {/* the dialog floats over the docked panel and the graphics window */}
      <main className="grid flex-1 grid-cols-1">
        <div className="col-start-1 row-start-1 flex flex-col">
          <div className="h-2 bg-[#bebebe]" />
          <div className="h-2 border-t-2 border-[#909090] bg-linear-to-b from-[#aaaaaa] to-[#cccccc]" />
          <div className="h-2.5 border-t-2 border-[#f3f3f3] bg-linear-to-b from-[#dadada] to-[#c6c6c6]" />
          <div className="h-1 border-t-2 border-[#606060] bg-[#b0b0b0]" />
          <div className="flex flex-1">
            <div className="w-[681px] shrink-0 border-t-2 border-l-2 border-t-white border-l-[#777] bg-[#ebebeb]" />
            <div className="w-1 shrink-0 border-r-2 border-l-2 border-r-[#c8c8c8] border-l-[#707070]" />
            <div className="flex-1 border-t-2 border-l-2 border-[#636363] bg-linear-to-b from-[#b3b4b6] to-[#e7e8ea] to-85% pl-0.5">
              <Viewport />
            </div>
          </div>
        </div>
        <section className="z-10 col-start-1 row-start-1 ml-2 w-[692px]">
          <TitleTabs />
          <Calibration />
          <div className="h-[5px] border-t-2 border-black bg-[#555]" />
        </section>
      </main>
    </div>
  )
}
